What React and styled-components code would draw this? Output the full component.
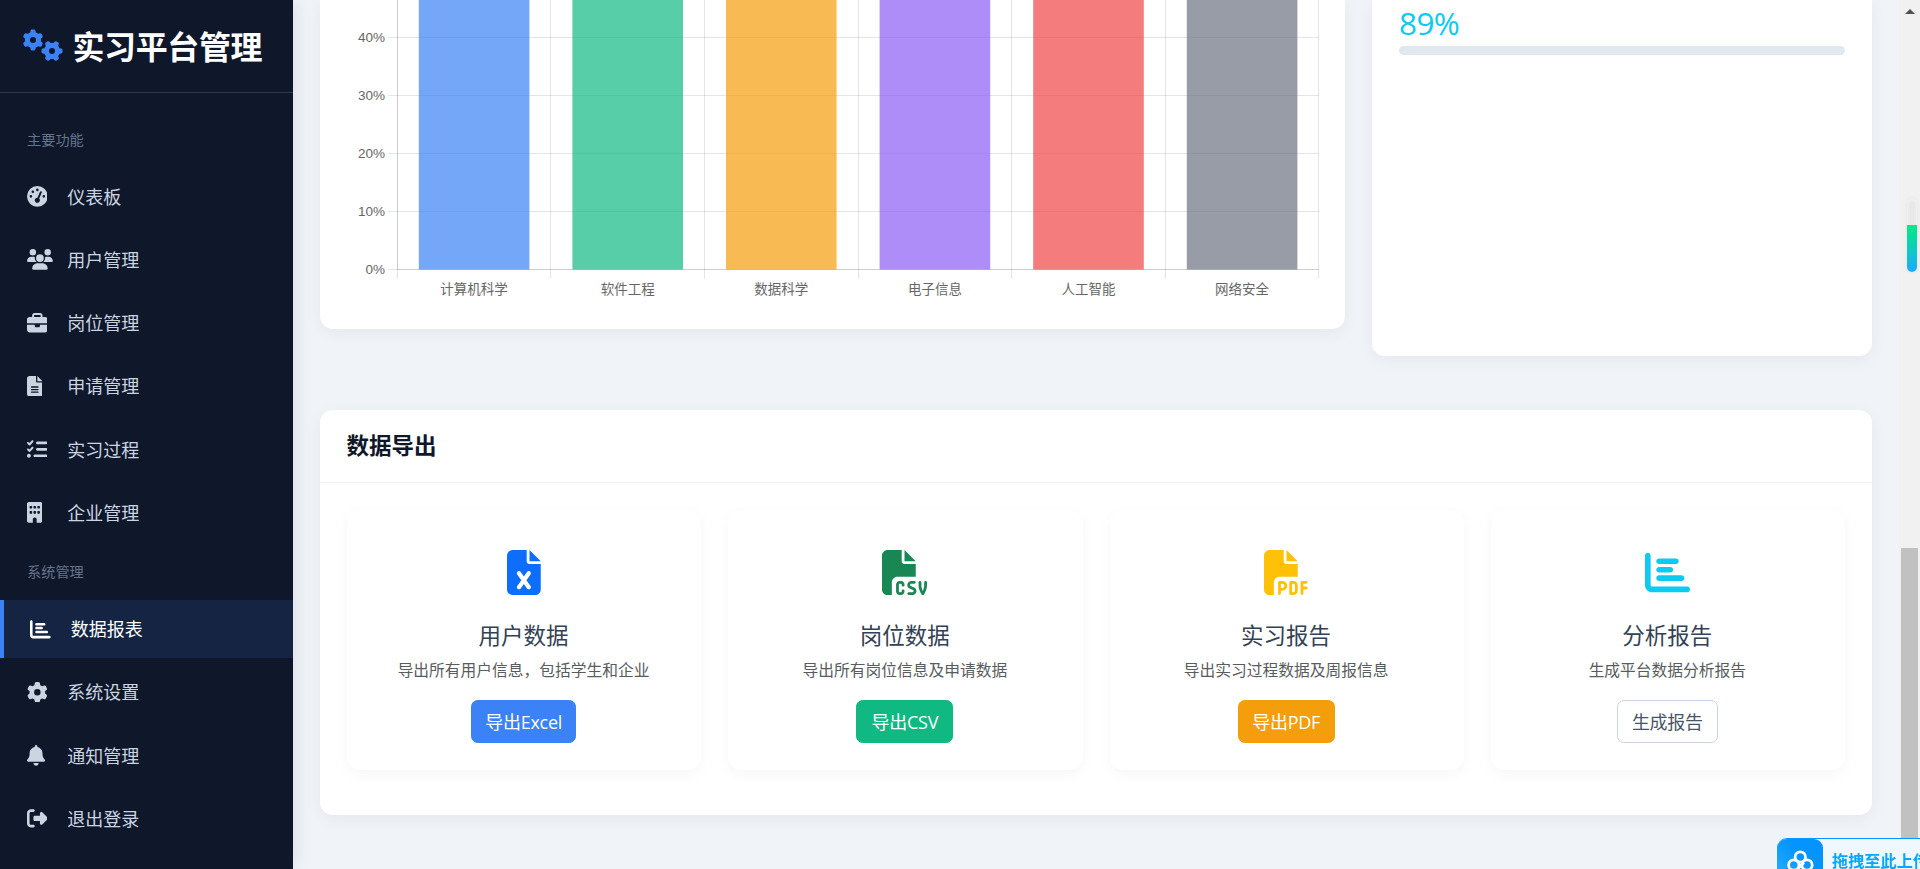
import React from "react";
import styled, { createGlobalStyle } from "styled-components";
import {
  FaBell,
  FaBriefcase,
  FaBuilding,
  FaChartBar,
  FaFileCsv,
  FaFileExcel,
  FaFileLines,
  FaFilePdf,
  FaGaugeHigh,
  FaGear,
  FaGears,
  FaListCheck,
  FaRightFromBracket,
  FaUsers,
} from "react-icons/fa6";

const GlobalStyle = createGlobalStyle`
  * {
    box-sizing: border-box;
  }

  body {
    margin: 0;
    overflow: hidden;
    font-family: "Open Sans", "Noto Sans CJK SC", sans-serif;
    font-size: 18px;
    color: #334155;
    background: #f0f4f8;
  }
`;

const Page = styled.div`
  display: flex;
  height: 869px;
  overflow: hidden;
`;

/* sidebar */

const Sidebar = styled.aside`
  flex: none;
  width: 293px;
  background: #0f172a;
  box-shadow: 4px 0 16px rgba(0, 0, 0, 0.07);
`;

const Logo = styled.div`
  display: flex;
  align-items: center;
  gap: 10px;
  height: 93px;
  padding: 0 0 2px 22.5px;
  border-bottom: 1px solid #2d3b50;
  color: #fff;
  font-size: 32px;
  font-weight: 700;
  letter-spacing: -0.4px;
  white-space: nowrap;

  svg {
    width: 40px;
    height: 32px;
    color: #3b82f6;
  }
`;

const MenuTitle = styled.div`
  height: ${(props) => (props.$first ? "74.5px" : "53.3px")};
  padding: ${(props) => (props.$first ? "36px" : "14.5px")} 0 0 27px;
  color: #64748b;
  font-size: 14.2px;
  line-height: 22px;
`;

const MenuItem = styled.a`
  display: flex;
  align-items: center;
  height: 58px;
  margin-bottom: 5.2px;
  padding-left: ${(props) => (props.$active ? "30.2px" : "26.7px")};
  color: ${(props) => (props.$active ? "#fff" : "#cbd5e1")};
  background: ${(props) => (props.$active ? "rgba(59, 130, 246, 0.12)" : "none")};
  box-shadow: ${(props) => (props.$active ? "inset 4px 0 #3b82f6" : "none")};
  text-decoration: none;
`;

const MenuIcon = styled.span`
  display: flex;
  flex: none;
  width: 40.5px;

  svg {
    flex: none;
    width: ${(props) => props.$width || 20.7}px;
    height: 20.7px;
  }
`;

const MenuLabel = styled.span`
  padding-bottom: 1.5px;
`;

/* content */

const Main = styled.main`
  flex: 1;
  padding: 0 27px;
`;

const Row = styled.div`
  display: flex;
  align-items: flex-start;
  gap: 27px;
  height: 356px;
  margin-bottom: 54px;
`;

const Card = styled.section`
  background: #fff;
  border-radius: 13px;
  box-shadow: 0 4px 16px rgba(0, 0, 0, 0.05);
`;

const ChartCard = styled(Card)`
  width: 1025px;
  height: 329px;
  border-top-left-radius: 0;
  border-top-right-radius: 0;
`;

const RateCard = styled(Card)`
  flex: 1;
  height: 356px;
  padding: 3px 27px;
  border-top-left-radius: 0;
  border-top-right-radius: 0;
`;

const Rate = styled.div`
  height: 43px;
  color: #0dcaf0;
  font-size: 31.5px;
  font-weight: 500;
  line-height: 40px;
  letter-spacing: -0.6px;
`;

const Progress = styled.div`
  height: 9px;
  border-radius: 5px;
  background: #e2e8f0;
`;

const ExportCard = styled(Card)`
  height: 405px;
`;

const ExportHeader = styled.h5`
  height: 73px;
  margin: 0;
  padding-left: 26.5px;
  border-bottom: 1px solid #f1f5f9;
  color: #0f172a;
  font-size: 22.5px;
  font-weight: 700;
  line-height: 72px;
`;

const ExportGrid = styled.div`
  display: grid;
  grid-template-columns: repeat(4, 1fr);
  gap: 27px;
  padding: 27px;
`;

const ExportItem = styled.div`
  display: flex;
  flex-direction: column;
  align-items: center;
  height: 260px;
  padding: 39.5px 1px 0 0;
  border-radius: 13px;
  background: #fff;
  box-shadow: 0 4px 14px rgba(0, 0, 0, 0.035);
`;

const ExportIcon = styled.div`
  display: flex;
  height: 45px;
  color: ${(props) => props.$color};

  svg {
    width: ${(props) => props.$width || 45}px;
    height: 45px;
  }
`;

const ExportName = styled.div`
  margin-top: 25px;
  font-size: 22.5px;
  line-height: 32px;
`;

const ExportText = styled.div`
  margin-top: 6px;
  color: #585c5e;
  font-size: 15.75px;
  line-height: 24px;
`;

const Button = styled.button`
  width: ${(props) => props.$width}px;
  height: 43px;
  margin-top: 18.5px;
  padding: 0 0 2px;
  border: 1px solid ${(props) => props.$border || props.$bg};
  border-radius: 6.75px;
  background: ${(props) => props.$bg};
  color: ${(props) => props.$color || "#fff"};
  font-family: inherit;
  font-size: 18px;
  letter-spacing: -0.25px;
  white-space: nowrap;
`;

/* right edge */

const Scrollbar = styled.div`
  position: relative;
  display: flex;
  flex: none;
  flex-direction: column;
  align-items: center;
  width: 21px;
  padding-top: 9px;
  background: #f1f1f1;
`;

const ScrollUp = styled.div`
  border: 5px solid transparent;
  border-top: 0;
  border-bottom-color: #505050;
`;

const ScrollThumb = styled.div`
  width: 17px;
  height: 321px;
  margin-top: auto;
  background: #c1c1c1;
`;

const Meter = styled.div`
  position: absolute;
  top: 199px;
  right: 3px;
  width: 10px;
  height: 73px;
  padding-top: 26px;
  overflow: hidden;
  border-radius: 5px;
  background: #e8e8e8;
  box-shadow: 0 0 5px rgba(0, 0, 0, 0.06), inset 0 0 2px 1px #f3f3f3;
`;

const MeterFill = styled.div`
  height: 100%;
  background: linear-gradient(#00ec80, #1caaff);
`;

const Upload = styled.div`
  position: fixed;
  right: 0;
  bottom: 0;
  display: flex;
  width: 143px;
  height: 31px;
  overflow: hidden;
  border-top: 1px solid #0795ff;
  border-top-left-radius: 10px;
  background: #f0f8ff;
  color: #06a7ff;
  font-size: 16.2px;
  font-weight: 700;
  line-height: 45px;
  white-space: nowrap;
`;

const UploadIcon = styled.div`
  flex: none;
  width: 46px;
  height: 46px;
  margin-right: 9px;
  border-top-right-radius: 9px;
  background: linear-gradient(45deg, #2bb2ff, #0494ff 60%);
`;

const mainMenu = [
  { icon: <FaGaugeHigh />, label: "仪表板" },
  { icon: <FaUsers />, label: "用户管理", width: 25.9 },
  { icon: <FaBriefcase />, label: "岗位管理" },
  { icon: <FaFileLines />, label: "申请管理", width: 15.5 },
  { icon: <FaListCheck />, label: "实习过程" },
  { icon: <FaBuilding />, label: "企业管理", width: 15.5 },
];

const systemMenu = [
  { icon: <FaChartBar />, label: "数据报表", active: true },
  { icon: <FaGear />, label: "系统设置" },
  { icon: <FaBell />, label: "通知管理", width: 18.1 },
  { icon: <FaRightFromBracket />, label: "退出登录" },
];

const majors = [
  { name: "计算机科学", color: "#3b82f6" },
  { name: "软件工程", color: "#10b981" },
  { name: "数据科学", color: "#f59e0b" },
  { name: "电子信息", color: "#8b5cf6" },
  { name: "人工智能", color: "#ef4444" },
  { name: "网络安全", color: "#6b7280" },
];

const exportsList = [
  {
    icon: <FaFileExcel />,
    iconWidth: 33.75,
    color: "#0d6efd",
    name: "用户数据",
    text: "导出所有用户信息，包括学生和企业",
    button: "导出Excel",
    buttonWidth: 105,
    bg: "#3b82f6",
  },
  {
    icon: <FaFileCsv />,
    color: "#198754",
    name: "岗位数据",
    text: "导出所有岗位信息及申请数据",
    button: "导出CSV",
    buttonWidth: 97,
    bg: "#10b981",
  },
  {
    icon: <FaFilePdf />,
    color: "#ffc107",
    name: "实习报告",
    text: "导出实习过程数据及周报信息",
    button: "导出PDF",
    buttonWidth: 97,
    bg: "#f59e0b",
  },
  {
    icon: <FaChartBar />,
    color: "#0dcaf0",
    name: "分析报告",
    text: "生成平台数据分析报告",
    button: "生成报告",
    buttonWidth: 101,
    bg: "#fff",
    border: "#cbd5e1",
    buttonColor: "#475569",
  },
];

const Menu = ({ items }) =>
  items.map((item) => (
    <MenuItem href="#" key={item.label} $active={item.active}>
      <MenuIcon $width={item.width}>{item.icon}</MenuIcon>
      <MenuLabel>{item.label}</MenuLabel>
    </MenuItem>
  ));

const LEFT = 77.3;
const STEP = 153.6;
const RIGHT = 998.9;
const BASE = 269.5;

const RateChart = () => (
  <svg width="1025" height="329">
    <g stroke="rgba(0,0,0,0.1)">
      {[0, 1, 2, 3, 4].map((i) => (
        <line key={i} x1="68" x2={RIGHT} y1={BASE - i * 58} y2={BASE - i * 58} />
      ))}
      {[0, 1, 2, 3, 4, 5, 6].map((i) => {
        const x = Math.floor(LEFT + i * STEP) + 0.5;
        return <line key={i} x1={x} x2={x} y1="0" y2="279" />;
      })}
      <line x1="77.5" x2="77.5" y1="0" y2={BASE} />
      <line x1={LEFT} x2={RIGHT} y1={BASE} y2={BASE} />
    </g>
    {majors.map((major, i) => (
      <rect
        key={major.name}
        x={LEFT + i * STEP + 21.5}
        y="0"
        width="110.6"
        height={BASE}
        fill={major.color}
        fillOpacity="0.7"
      />
    ))}
    <g fill="#666" fontSize="13.5" fontFamily="'Liberation Sans', 'Noto Sans CJK SC', sans-serif">
      {[0, 1, 2, 3, 4].map((i) => (
        <text key={i} x="65" y={BASE - i * 58 + 4.5} textAnchor="end">
          {i * 10}%
        </text>
      ))}
      {majors.map((major, i) => (
        <text key={major.name} x={LEFT + (i + 0.5) * STEP} y="294" textAnchor="middle">
          {major.name}
        </text>
      ))}
    </g>
  </svg>
);

const App = () => {
  return (
    <>
      <GlobalStyle />
      <Page>
        <Sidebar>
          <Logo>
            <FaGears />
            实习平台管理
          </Logo>
          <MenuTitle $first>主要功能</MenuTitle>
          <Menu items={mainMenu} />
          <MenuTitle>系统管理</MenuTitle>
          <Menu items={systemMenu} />
        </Sidebar>
        <Main>
          <Row>
            <ChartCard>
              <RateChart />
            </ChartCard>
            <RateCard>
              <Rate>89%</Rate>
              <Progress />
            </RateCard>
          </Row>
          <ExportCard>
            <ExportHeader>数据导出</ExportHeader>
            <ExportGrid>
              {exportsList.map((item) => (
                <ExportItem key={item.name}>
                  <ExportIcon $color={item.color} $width={item.iconWidth}>
                    {item.icon}
                  </ExportIcon>
                  <ExportName>{item.name}</ExportName>
                  <ExportText>{item.text}</ExportText>
                  <Button
                    $width={item.buttonWidth}
                    $bg={item.bg}
                    $border={item.border}
                    $color={item.buttonColor}
                  >
                    {item.button}
                  </Button>
                </ExportItem>
              ))}
            </ExportGrid>
          </ExportCard>
        </Main>
        <Scrollbar>
          <ScrollUp />
          <ScrollThumb />
          <Meter>
            <MeterFill />
          </Meter>
        </Scrollbar>
      </Page>
      <Upload>
        <UploadIcon>
          <svg width="46" height="46" fill="none" stroke="#fff" strokeWidth="2.8">
            <circle cx="23.3" cy="18" r="5.2" />
            <circle cx="16.8" cy="26" r="5.2" />
            <circle cx="30" cy="26" r="5.2" />
            <path d="M20.5 30 L27 23.5" />
          </svg>
        </UploadIcon>
        拖拽至此上传
      </Upload>
    </>
  );
};

export default App;
